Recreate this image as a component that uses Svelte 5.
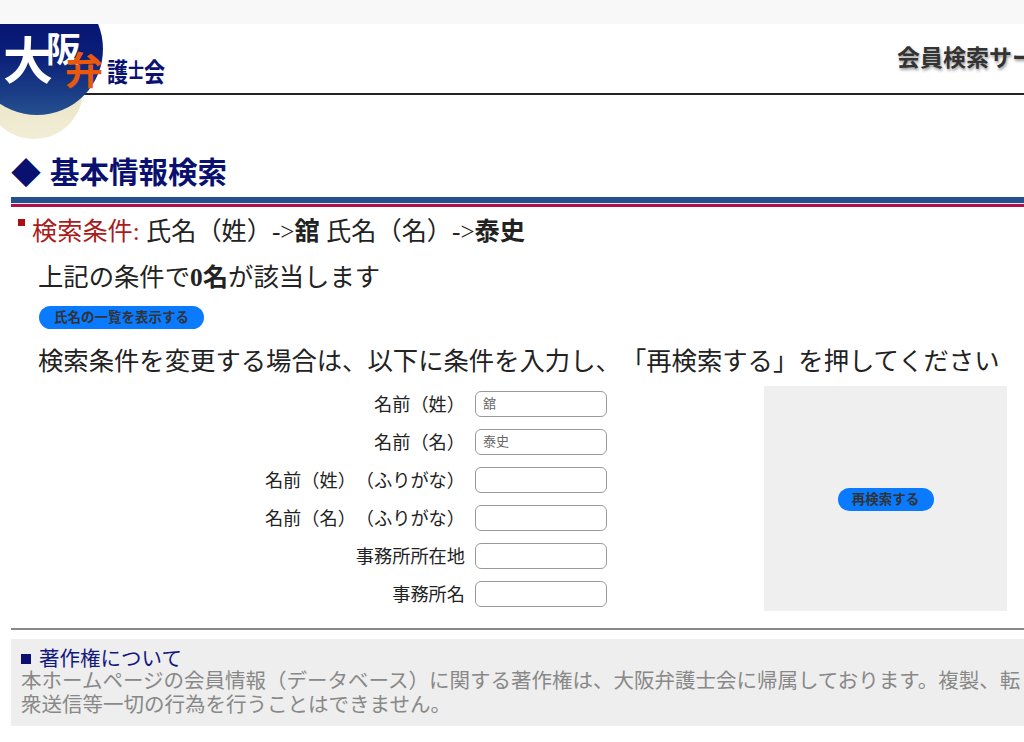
<script>
  const fields = [
    { label: "名前（姓）", value: "舘" },
    { label: "名前（名）", value: "泰史" },
    { label: "名前（姓）（ふりがな）", value: "" },
    { label: "名前（名）（ふりがな）", value: "" },
    { label: "事務所所在地", value: "" },
    { label: "事務所名", value: "" }
  ];
</script>

<div class="page">
  <div class="topband"></div>

  <header class="header">
    <svg class="logo" width="170" height="116" viewBox="0 0 170 116" aria-label="大阪弁護士会">
      <defs>
        <linearGradient id="disc" x1="0" y1="0" x2="0" y2="1">
          <stop offset="0" stop-color="#00076e" />
          <stop offset="0.55" stop-color="#0a1f78" />
          <stop offset="1" stop-color="#25508f" />
        </linearGradient>
        <linearGradient id="moon" x1="0" y1="0" x2="0" y2="1">
          <stop offset="0" stop-color="#e6dfb8" />
          <stop offset="1" stop-color="#f1edd6" />
        </linearGradient>
      </defs>
      <circle cx="34" cy="66" r="49" fill="url(#moon)" />
      <circle cx="37" cy="25" r="66" fill="url(#disc)" />
      <text class="logo-big" x="3" y="55">大</text>
      <text class="logo-mid" x="46" y="38">阪</text>
      <text class="logo-accent" x="65" y="60">弁</text>
      <text class="logo-small" transform="translate(107 58) scale(1 1.25)">護<tspan class="logo-tiny" dy="-3">士</tspan><tspan dy="3">会</tspan></text>
    </svg>
    <div class="service">会員検索サービス</div>
  </header>

  <section class="title">
    <h1><span class="diamond">◆</span>基本情報検索</h1>
    <div class="rule"></div>
  </section>

  <main class="content">
    <p class="condition">
      <span class="marker"></span><span class="red">検索条件:</span> 氏名（姓）-&gt;<b>舘</b> 氏名（名）-&gt;<b>泰史</b>
    </p>

    <div class="inset">
      <p class="result">上記の条件で<b>0名</b>が該当します</p>
      <button class="pill list-btn" type="button">氏名の一覧を表示する</button>
      <p class="hint">検索条件を変更する場合は、以下に条件を入力し、「再検索する」を押してください</p>
    </div>

    <div class="search">
      <form class="fields">
        {#each fields as field}
          <label class="field">
            <span>{field.label}</span>
            <input type="text" value={field.value} />
          </label>
        {/each}
      </form>
      <div class="panel">
        <button class="pill" type="button">再検索する</button>
      </div>
    </div>
  </main>

  <footer class="footer">
    <div class="notice">
      <h2><span class="square"></span>著作権について</h2>
      <p>本ホームページの会員情報（データベース）に関する著作権は、大阪弁護士会に帰属しております。複製、転<br />衆送信等一切の行為を行うことはできません。</p>
    </div>
  </footer>
</div>

<style>
  :global(body) {
    margin: 0;
    background: #fff;
  }

  .page {
    position: relative;
    width: 1024px;
    height: 742px;
    overflow: hidden;
    color: #222;
    font-family: "Liberation Serif", "Noto Sans CJK JP", serif;
    text-spacing-trim: space-all;
  }

  .topband {
    height: 24px;
    background: #f8f8f8;
  }

  .header {
    display: flex;
    align-items: center;
    height: 69px;
    padding-left: 897px;
    border-bottom: 2px solid #222;
    white-space: nowrap;
  }

  .logo {
    position: absolute;
    left: 0;
    top: 24px;
  }

  .logo-big {
    font-size: 50px;
    font-weight: 700;
    fill: #fff;
  }

  .logo-mid {
    font-size: 35px;
    font-weight: 700;
    fill: #fff;
  }

  .logo-accent {
    font-size: 38px;
    font-weight: 700;
    fill: #e8590c;
  }

  .logo-small {
    font-size: 21px;
    font-weight: 700;
    fill: #0b1272;
  }

  .logo-tiny {
    font-size: 16px;
  }

  .service {
    padding-bottom: 5px;
    font-family: "Liberation Sans", "Noto Sans CJK JP", sans-serif;
    font-size: 23px;
    font-weight: 700;
    color: #333;
    text-shadow: 1px 2px 3px #999;
  }

  .title {
    padding: 61px 0 0 11px;
  }

  h1 {
    display: flex;
    align-items: center;
    height: 41px;
    box-sizing: border-box;
    margin: 0;
    padding-bottom: 6px;
    font-size: 29.5px;
    font-weight: 700;
    line-height: 35px;
    color: #0a1070;
    white-space: nowrap;
  }

  .diamond {
    width: 39px;
    font-size: 30px;
  }

  .rule {
    height: 10px;
    margin-right: -10px;
    background: linear-gradient(#24508f 6px, #e4e4ee 6px 7px, #b01045 7px);
  }

  .content {
    padding-left: 18px;
  }

  p {
    margin: 0;
  }

  .condition {
    position: relative;
    height: 34px;
    margin-top: 8px;
    padding-left: 14px;
    font-size: 25.2px;
    line-height: 34px;
    white-space: nowrap;
  }

  .marker {
    position: absolute;
    left: 0;
    top: 4px;
    width: 7px;
    height: 7px;
    background: #a80f0f;
  }

  .red {
    color: #a81c1c;
  }

  .inset {
    padding-left: 20px;
  }

  .result {
    margin-top: 11px;
    font-size: 25.35px;
    line-height: 34px;
    white-space: nowrap;
  }

  .pill {
    display: block;
    height: 23px;
    padding: 0 14px;
    border: 0;
    border-radius: 12px;
    background: #0a7aff;
    color: #333;
    font-family: inherit;
    font-size: 13.5px;
    font-weight: 700;
    line-height: 23px;
    white-space: nowrap;
  }

  .list-btn {
    width: 165px;
    margin: 12px 0 0 1px;
    padding: 0;
  }

  .hint {
    margin-top: 15px;
    font-size: 25.35px;
    line-height: 34px;
    white-space: nowrap;
  }

  .search {
    display: flex;
    margin-top: 8px;
  }

  .fields {
    display: flex;
    flex-direction: column;
    gap: 12px;
    width: 589px;
    padding-top: 5px;
    font-size: 18.2px;
  }

  .field {
    display: flex;
    align-items: center;
    justify-content: flex-end;
    gap: 10px;
    height: 26px;
    white-space: nowrap;
  }

  .field span {
    padding-bottom: 3px;
  }

  input {
    width: 132px;
    height: 26px;
    box-sizing: border-box;
    padding: 0 7px 3px;
    border: 1.5px solid #999;
    border-radius: 6px;
    background: #fff;
    color: #666;
    font-family: inherit;
    font-size: 13px;
    outline: none;
  }

  .panel {
    display: flex;
    align-items: center;
    justify-content: center;
    width: 243px;
    height: 225px;
    margin-left: 157px;
    background: #efefef;
  }

  .panel .pill {
    width: 96px;
    margin-top: 2px;
    padding: 0;
  }

  .footer {
    margin-top: 17px;
    padding-left: 11px;
  }

  .footer::before {
    content: "";
    display: block;
    height: 2px;
    background: #888;
  }

  .notice {
    margin-top: 9px;
    height: 87px;
    padding: 9px 0 0 10px;
    box-sizing: border-box;
    background: #eee;
    white-space: nowrap;
    color: #888;
    font-size: 20.5px;
    line-height: 24px;
  }

  .notice p {
    margin-top: -1px;
  }

  h2 {
    display: flex;
    align-items: center;
    height: 22px;
    margin: 0;
    font-size: 20.5px;
    font-weight: 400;
    line-height: 22px;
    color: #12187e;
  }

  .square {
    width: 10px;
    height: 10px;
    margin-right: 8px;
    background: #0a1070;
  }
</style>
